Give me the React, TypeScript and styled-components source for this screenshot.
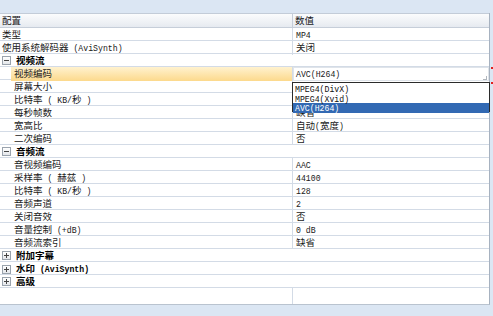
import React, { FC } from "react";
import styled, { createGlobalStyle, css } from "styled-components";

const GlobalStyle = createGlobalStyle`
  html, body {
    margin: 0;
    padding: 0;
    background: #dbe6f3;
  }
  body {
    font-family: "Noto Sans CJK SC", "Liberation Mono", monospace;
    font-size: 9.5px;
    color: #1a1a1a;
  }
`;

const Page = styled.div`
  width: 493px;
  height: 316px;
  box-sizing: border-box;
  padding: 13px 3px 11px 0;
  background: #dbe6f3;
  position: relative;
`;

const Grid = styled.div`
  height: 100%;
  display: flex;
  flex-direction: column;
  background: #fff;
  border-right: 1px solid #a7b2c0;
  border-bottom: 1px solid #b9c3cf;
  box-sizing: border-box;
`;

const Header = styled.div`
  display: grid;
  grid-template-columns: 293px 1fr;
  height: 15px;
  box-sizing: border-box;
  border-top: 1px solid #c3ccd8;
  border-bottom: 1px solid #c6ced9;
  background: linear-gradient(#fbfcfd, #e6eaf0);
  line-height: 13px;
`;

const HeaderCell = styled.div<{ $divider?: boolean }>`
  padding-left: 2px;
  ${(p) => p.$divider && css`border-right: 1px solid #c6ced9;`}
`;

const Row = styled.div<{ $full?: boolean }>`
  display: grid;
  grid-template-columns: ${(p) => (p.$full ? "1fr" : "293px 1fr")};
  height: 13px;
  box-sizing: border-box;
  border-bottom: 1px solid #d3dbe6;
  line-height: 12px;
  white-space: nowrap;
`;

const NameCell = styled.div<{ $level: number }>`
  display: flex;
  border-right: 1px solid #d3dbe6;
  padding-left: ${(p) => (p.$level ? 11 : 0)}px;
`;

const Label = styled.div<{ $selected?: boolean }>`
  flex: 1;
  padding-left: 3px;
  ${(p) =>
    p.$selected &&
    css`
      background: linear-gradient(#fff2cf, #fcd98c);
    `}
`;

const TopLabel = styled.div`
  padding-left: 2px;
`;

const ValueCell = styled.div<{ $combo?: boolean }>`
  position: relative;
  padding-left: 3px;
  ${(p) =>
    p.$combo &&
    css`
      background: #fff;
      box-shadow: inset 0 0 0 1px #dfe4ea;
    `}
`;

const GroupCell = styled.div`
  display: flex;
  align-items: center;
  font-weight: bold;
  color: #000;
`;

const Toggle = styled.span`
  width: 7px;
  height: 7px;
  margin: 0 5px 0 2px;
  border: 1px solid #9aa3ad;
  background: linear-gradient(#fff, #e4e7eb);
  position: relative;
  box-sizing: content-box;
  flex: none;
  &::before {
    content: "";
    position: absolute;
    left: 1px;
    right: 1px;
    top: 3px;
    height: 1px;
    background: #444;
  }
`;

const PlusToggle = styled(Toggle)`
  &::after {
    content: "";
    position: absolute;
    top: 1px;
    bottom: 1px;
    left: 3px;
    width: 1px;
    background: #444;
  }
`;

const Latin = styled.span`
  font-family: "Liberation Mono", monospace;
  font-size: 8.2px;
`;

const Filler = styled.div`
  flex: 1;
  display: grid;
  grid-template-columns: 293px 1fr;
`;

const FillerName = styled.div`
  border-right: 1px solid #d3dbe6;
`;

const Dropdown = styled.div`
  position: absolute;
  z-index: 2;
  top: 15px;
  left: -1px;
  right: -1px;
  height: 30px;
  box-sizing: border-box;
  border: 1px solid #2b2b2b;
  background: #fff;
  padding-top: 1px;
`;

const Option = styled.div<{ $active?: boolean }>`
  height: 9.5px;
  line-height: 9.5px;
  padding-left: 2px;
  color: ${(p) => (p.$active ? "#fff" : "#111")};
  background: ${(p) => (p.$active ? "#3269b3" : "transparent")};
`;

const Grip = styled.span`
  position: absolute;
  right: 2px;
  bottom: 1px;
  width: 3px;
  height: 3px;
  border-right: 1px solid #b0b6bd;
  border-bottom: 1px solid #b0b6bd;
`;

const Mark = styled.span<{ $top: number }>`
  position: absolute;
  right: 0;
  top: ${(p) => p.$top}px;
  width: 2px;
  height: 2px;
  background: #e02020;
`;

// half-width runs are narrower than the CJK glyphs, as in the original UI font
const Txt: FC<{ s: string }> = ({ s }) => (
  <>
    {s.split(/([\x20-\x7e]+)/).map((part, i) =>
      !part ? null : /^[\x20-\x7e]+$/.test(part) ? (
        <Latin key={i}>{part}</Latin>
      ) : (
        <React.Fragment key={i}>{part}</React.Fragment>
      )
    )}
  </>
);

type Item =
  | { kind: "prop"; name: string; value: string; level: number; selected?: boolean }
  | { kind: "group"; name: string; open: boolean };

const items: Item[] = [
  { kind: "prop", name: "类型", value: "MP4", level: 0 },
  { kind: "prop", name: "使用系统解码器 (AviSynth)", value: "关闭", level: 0 },
  { kind: "group", name: "视频流", open: true },
  { kind: "prop", name: "视频编码", value: "AVC(H264)", level: 1, selected: true },
  { kind: "prop", name: "屏幕大小", value: "", level: 1 },
  { kind: "prop", name: "比特率 ( KB/秒 )", value: "", level: 1 },
  { kind: "prop", name: "每秒帧数", value: "缺省", level: 1 },
  { kind: "prop", name: "宽高比", value: "自动(宽度)", level: 1 },
  { kind: "prop", name: "二次编码", value: "否", level: 1 },
  { kind: "group", name: "音频流", open: true },
  { kind: "prop", name: "音视频编码", value: "AAC", level: 1 },
  { kind: "prop", name: "采样率 ( 赫兹 )", value: "44100", level: 1 },
  { kind: "prop", name: "比特率 ( KB/秒 )", value: "128", level: 1 },
  { kind: "prop", name: "音频声道", value: "2", level: 1 },
  { kind: "prop", name: "关闭音效", value: "否", level: 1 },
  { kind: "prop", name: "音量控制 (+dB)", value: "0 dB", level: 1 },
  { kind: "prop", name: "音频流索引", value: "缺省", level: 1 },
  { kind: "group", name: "附加字幕", open: false },
  { kind: "group", name: "水印 (AviSynth)", open: false },
  { kind: "group", name: "高级", open: false },
];

const codecs = ["MPEG4(DivX)", "MPEG4(Xvid)", "AVC(H264)"];

const App: FC = () => {
  return (
    <Page>
      <GlobalStyle />
      <Grid>
        <Header>
          <HeaderCell $divider>配置</HeaderCell>
          <HeaderCell>数值</HeaderCell>
        </Header>
        {items.map((it, i) =>
          it.kind === "group" ? (
            <Row key={i} $full>
              <GroupCell>
                {it.open ? <Toggle /> : <PlusToggle />}
                <span>
                  <Txt s={it.name} />
                </span>
              </GroupCell>
            </Row>
          ) : (
            <Row key={i}>
              <NameCell $level={it.level}>
                {it.level ? (
                  <Label $selected={it.selected}>
                    <Txt s={it.name} />
                  </Label>
                ) : (
                  <TopLabel>
                    <Txt s={it.name} />
                  </TopLabel>
                )}
              </NameCell>
              <ValueCell $combo={it.selected}>
                <Txt s={it.value} />
                {it.selected && (
                  <>
                    <Grip />
                    <Dropdown>
                      {codecs.map((c) => (
                        <Option key={c} $active={c === it.value}>
                          <Latin>{c}</Latin>
                        </Option>
                      ))}
                    </Dropdown>
                  </>
                )}
              </ValueCell>
            </Row>
          )
        )}
        <Filler>
          <FillerName />
          <div />
        </Filler>
      </Grid>
      <Mark $top={67} />
      <Mark $top={82} />
    </Page>
  );
};

export default App;
